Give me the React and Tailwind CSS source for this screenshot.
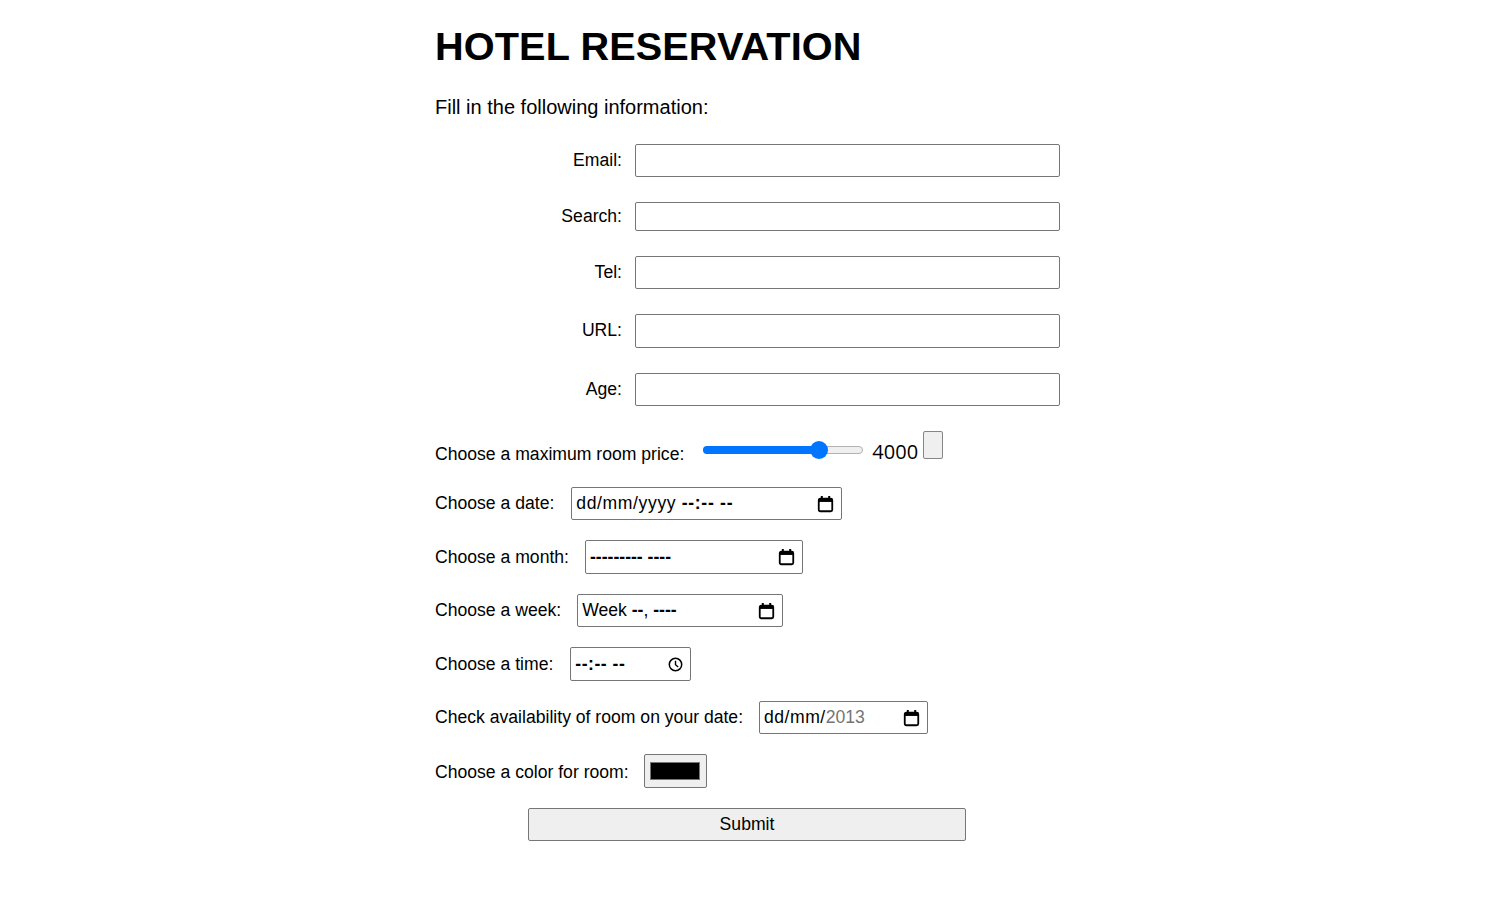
import React from "react";

const Cal = () => (
  <svg width="17" height="18" viewBox="0 0 17 18" className="shrink-0">
    <rect x="1.75" y="3.75" width="13.5" height="12.5" rx="1.5" fill="none" stroke="#000" strokeWidth="1.8" />
    <rect x="1.75" y="3.75" width="13.5" height="3.2" fill="#000" />
    <rect x="3.8" y="1" width="2" height="3.5" fill="#000" />
    <rect x="11.2" y="1" width="2" height="3.5" fill="#000" />
  </svg>
);

const Clock = () => (
  <svg width="15" height="15" viewBox="0 0 15 15" className="shrink-0">
    <circle cx="7.5" cy="7.5" r="6.2" fill="none" stroke="#000" strokeWidth="1.5" />
    <path d="M7.5 3.8 V7.7 L10.2 10" fill="none" stroke="#000" strokeWidth="1.4" />
  </svg>
);

const TextBox = ({ h }) => (
  <div className={`w-[425px] ${h} border border-[#767676] rounded-[2px] bg-white`} />
);

const Row = ({ label, h }) => (
  <div className="flex items-center">
    <div className="w-[187px] text-right pr-0 text-[17.6px] leading-none">{label}</div>
    <div className="w-[13px]" />
    <TextBox h={h} />
  </div>
);

const Box = ({ w, h, children }) => (
  <div className={`${w} ${h} border border-[#767676] rounded-[2px] bg-white flex items-center justify-between pl-[4px] pr-[7px]`}>
    {children}
  </div>
);

export default function App() {
  return (
    <div className="bg-white min-h-[924px] text-black" style={{ fontFamily: '"Liberation Sans", Arial, sans-serif' }}>
      <div className="w-[627px] mx-auto pt-[23px]">
        <h1 className="text-[39.7px] font-bold leading-[46px] tracking-[0.1px]">HOTEL RESERVATION</h1>
        <p className="text-[20px] leading-[23px] mt-[27px]">Fill in the following information:</p>

        <div className="flex flex-col gap-[25px] mt-[25px]">
          <Row label="Email:" h="h-[33px]" />
          <Row label="Search:" h="h-[29px]" />
          <Row label="Tel:" h="h-[33px]" />
          <Row label="URL:" h="h-[34px]" />
          <Row label="Age:" h="h-[33px]" />
        </div>

        <div className="flex flex-col gap-[20px] mt-[25px] text-[17.6px]">
          <div className="flex items-center h-[28px] mb-[8px]">
            <span className="mt-[19px]">Choose a maximum room price:</span>
            <div className="ml-[19px] relative w-[160px] h-[18px] flex items-center mt-[10px]">
              <div className="w-full h-[8px] rounded-full bg-[#efefef] border border-[#b2b2b2]" />
              <div className="absolute left-0 top-[5px] w-[116px] h-[8px] rounded-full bg-[#0075ff]" />
              <div className="absolute left-[107px] top-0 w-[18px] h-[18px] rounded-full bg-[#0075ff]" />
            </div>
            <span className="ml-[9px] text-[20px] mt-[14px]" style={{ fontFamily: '"Open Sans", "Liberation Sans", sans-serif' }}>4000</span>
            <div className="ml-[5px] self-start w-[20px] h-[28px] bg-[#efefef] border border-[#858585] rounded-[2px]" />
          </div>

          <div className="flex items-center">
            <span>Choose a date:</span>
            <div className="ml-[17px]">
              <Box w="w-[271px]" h="h-[33px]">
                <span className="tracking-[0.6px]">dd/mm/yyyy <b className="font-bold tracking-[0.7px]">--:-- --</b></span>
                <Cal />
              </Box>
            </div>
          </div>

          <div className="flex items-center">
            <span>Choose a month:</span>
            <div className="ml-[16px]">
              <Box w="w-[218px]" h="h-[34px]">
                <span className="font-bold">--------- ----</span>
                <Cal />
              </Box>
            </div>
          </div>

          <div className="flex items-center">
            <span>Choose a week:</span>
            <div className="ml-[16px]">
              <Box w="w-[206px]" h="h-[33px]">
                <span>Week <b className="font-bold">--</b>, <b className="font-bold">----</b></span>
                <Cal />
              </Box>
            </div>
          </div>

          <div className="flex items-center">
            <span>Choose a time:</span>
            <div className="ml-[17px]">
              <Box w="w-[121px]" h="h-[34px]">
                <span className="font-bold tracking-[0.5px]">--:-- --</span>
                <Clock />
              </Box>
            </div>
          </div>

          <div className="flex items-center">
            <span>Check availability of room on your date:</span>
            <div className="ml-[16px]">
              <Box w="w-[169px]" h="h-[33px]">
                <span className="tracking-[0.5px]">dd/mm/<span className="text-[#757575] tracking-normal">2013</span></span>
                <Cal />
              </Box>
            </div>
          </div>

          <div className="flex items-center">
            <span className="mt-[3px]">Choose a color for room:</span>
            <div className="ml-[15px] w-[63px] h-[34px] bg-[#efefef] border border-[#767676] rounded-[2px] flex items-center justify-center">
              <div className="w-[50px] h-[18px] bg-black border border-[#777]" />
            </div>
          </div>

          <button className="ml-[93px] w-[438px] h-[33px] bg-[#efefef] border border-[#767676] rounded-[2px] text-[17.6px] leading-none pt-[1px]">
            Submit
          </button>
        </div>
      </div>
    </div>
  );
}
